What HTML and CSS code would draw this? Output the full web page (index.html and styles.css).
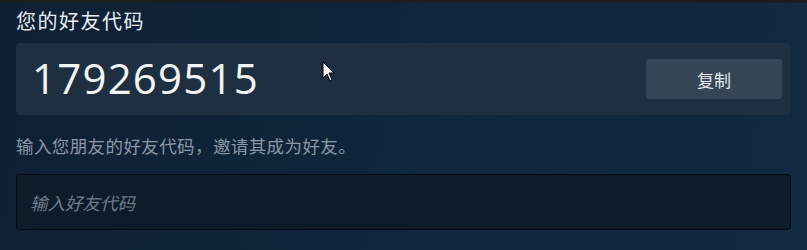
FILE: index.html
```html
<!DOCTYPE html>
<html lang="zh-CN">
<head>
<meta charset="utf-8">
<link rel="stylesheet" href="styles.css">
</head>
<body>
<div class="topbar"></div>
<main class="page">
  <h2 class="title">您的好友代码</h2>
  <div class="code-box">
    <span class="code">179269515</span>
    <button class="copy-btn">复制</button>
  </div>
  <p class="desc">输入您朋友的好友代码，邀请其成为好友。</p>
  <div class="input-box">
    <input class="code-input" type="text" placeholder="输入好友代码">
  </div>
</main>
<svg class="cursor" width="14" height="22" viewBox="0 0 14 22">
  <path d="M1 1 L1 17 L5 13 L8 20 L10 19 L7 12 L12 12 Z" fill="#fff" stroke="#000" stroke-width="1"/>
</svg>
</body>
</html>
```
FILE: styles.css
```css
html, body {
  margin: 0;
  padding: 0;
}
body {
  width: 807px;
  height: 250px;
  overflow: hidden;
  background: linear-gradient(100deg, #0f2034 0%, #10263c 50%, #12293f 100%);
  font-family: "Noto Sans CJK SC", "Noto Sans", sans-serif;
  position: relative;
}
.topbar {
  height: 3px;
  background: #1b1e23;
}
.page {
  padding: 0 16px 0 16px;
  display: flex;
  flex-direction: column;
}
.title {
  margin: 4px 0 0 0;
  font-size: 20px;
  font-weight: 400;
  line-height: 28px;
  color: #e8edf2;
  letter-spacing: 1.5px;
}
.code-box {
  margin-top: 8px;
  width: 775px;
  height: 72px;
  box-sizing: border-box;
  background: #1e2f42;
  border-radius: 4px;
  display: flex;
  align-items: center;
  justify-content: space-between;
  padding: 0 9px 0 16px;
}
.code {
  font-family: "Open Sans", "Noto Sans", sans-serif;
  font-size: 42px;
  font-weight: 500;
  color: #f2f5f8;
  letter-spacing: 1.2px;
  line-height: 1;
  margin-top: -3px;
}
.copy-btn {
  width: 136px;
  height: 40px;
  border: none;
  border-radius: 3px;
  background: #344555;
  color: #e6ebf0;
  font-family: "Noto Sans CJK SC", sans-serif;
  font-size: 17px;
  padding: 0;
}
.desc {
  margin: 18px 0 0 0;
  font-size: 17.5px;
  line-height: 26px;
  color: #8b98a6;
  letter-spacing: 0.4px;
}
.input-box {
  margin-top: 15px;
  width: 775px;
}
.code-input {
  width: 100%;
  height: 56px;
  box-sizing: border-box;
  background: #0d1c2b;
  border: 1px solid #050b12;
  border-radius: 3px;
  padding: 0 13px;
  font-family: "Noto Sans CJK SC", sans-serif;
  font-size: 17.5px;
  color: #dfe5eb;
  outline: none;
}
.code-input::placeholder {
  color: #6f7c8a;
  font-style: italic;
}
.cursor {
  position: absolute;
  left: 322px;
  top: 61px;
}
```
